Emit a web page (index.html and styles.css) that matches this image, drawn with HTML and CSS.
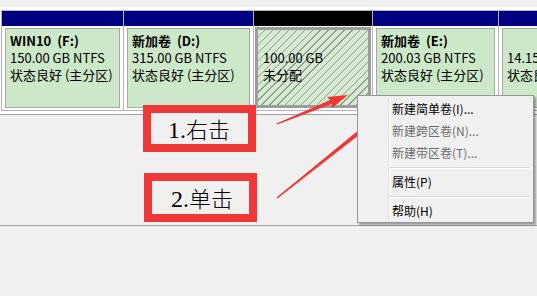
FILE: index.html
```html
<!DOCTYPE html>
<html lang="zh-CN">
  <head>
    <meta charset="UTF-8" />
    <title>磁盘管理</title>
    <link rel="stylesheet" href="styles.css">
  </head>
  <body>
    <div class="top-gap"></div>

    <!-- disk strip with partitions -->
    <div class="disk">
      <div class="part part-win">
        <div class="part-head"></div>
        <div class="part-body">
          <div class="vol">
            <p class="vol-name">WIN10&nbsp;&nbsp;(F:)</p>
            <p>150.00 GB NTFS</p>
            <p>状态良好 (主分区)</p>
          </div>
        </div>
      </div>
      <div class="part part-d">
        <div class="part-head"></div>
        <div class="part-body">
          <div class="vol">
            <p class="vol-name">新加卷&nbsp;&nbsp;(D:)</p>
            <p>315.00 GB NTFS</p>
            <p>状态良好 (主分区)</p>
          </div>
        </div>
      </div>
      <div class="part part-free">
        <div class="part-head black"></div>
        <div class="part-body">
          <div class="vol unallocated">
            <p class="vol-name">&nbsp;</p>
            <p>100.00 GB</p>
            <p>未分配</p>
          </div>
        </div>
      </div>
      <div class="part part-e">
        <div class="part-head"></div>
        <div class="part-body">
          <div class="vol">
            <p class="vol-name">新加卷&nbsp;&nbsp;(E:)</p>
            <p>200.03 GB NTFS</p>
            <p>状态良好 (主分区)</p>
          </div>
        </div>
      </div>
      <div class="part part-last">
        <div class="part-head"></div>
        <div class="part-body">
          <div class="vol">
            <p class="vol-name">&nbsp;</p>
            <p>14.15 GB NTFS</p>
            <p>状态良好 (主分区)</p>
          </div>
        </div>
      </div>
    </div>

    <div class="lower-pane"></div>

    <!-- annotations -->
    <div class="note note-1">1.<span class="cjk">右击</span></div>
    <div class="note note-2">2.<span class="cjk">单击</span></div>

    <svg class="arrows" width="537" height="296" viewBox="0 0 537 296">
      <polygon points="276.7,123.4 330.2,100.1 327.2,97 348,95 331.8,108.2 331.8,103.9 277.3,124.6" />
      <polygon points="276.5,197.4 370,120.8 365.4,118.3 387,110 374.2,129.2 372.8,124.2 277.5,198.6" />
    </svg>

    <!-- context menu -->
    <div class="menu">
      <div class="menu-item">新建简单卷(I)...</div>
      <div class="menu-item disabled">新建跨区卷(N)...</div>
      <div class="menu-item disabled">新建带区卷(T)...</div>
      <div class="menu-sep"></div>
      <div class="menu-item">属性(P)</div>
      <div class="menu-sep"></div>
      <div class="menu-item">帮助(H)</div>
    </div>
  </body>
</html>
```

FILE: styles.css
```css
* {
  margin: 0;
  padding: 0;
  box-sizing: border-box;
}
body {
  background: #f0f0f0;
  font-family: "Noto Sans CJK SC", "Noto Sans", sans-serif;
  width: 537px;
  height: 296px;
  overflow: hidden;
  position: relative;
}
.top-gap {
  height: 7px;
}
/* disk strip */
.disk {
  display: flex;
  background: #fff;
  padding: 3px 0 3px 1px;
  border-bottom: 1px solid #a0a0a0;
  overflow: hidden;
}
.part {
  flex: none;
  border: 1px solid #b4b4b4;
  height: 101px;
}
.part + .part {
  margin-left: -1px;
}
.part-win { width: 123px; }
.part-d { width: 131px; }
.part-free { width: 120px; }
.part-e { width: 127px; }
.part-last { width: 60px; }
.part-head {
  height: 15px;
  background: #000080;
}
.part-head.black {
  background: #000;
}
.part-body {
  padding: 2px 3px;
}
.vol {
  height: 80px;
  background: #cde8c8;
  border: 1px solid #a8a8a8;
  padding: 3px 0 0 4px;
  font-size: 13px;
  line-height: 17px;
  color: #000;
  white-space: nowrap;
  overflow: hidden;
}
.vol-name {
  font-weight: bold;
}
.part-free .part-body {
  padding: 1px 1px;
}
.unallocated {
  height: 81px;
  border: 3px solid #9c9c9c;
  padding: 2px 0 0 5px;
  background: repeating-linear-gradient(
    135deg,
    #d6ebd2 0,
    #d6ebd2 4.6px,
    #8e9e8e 4.6px,
    #8e9e8e 5.6px
  );
}
.lower-pane {
  height: 111px;
  border-bottom: 1px solid #a0a0a0;
}
/* red annotation boxes */
.note {
  position: absolute;
  left: 143px;
  width: 113px;
  border: 8px solid #f03838;
  background: #f0f0f0;
  font-family: "Liberation Serif", "Noto Sans CJK SC", serif;
  font-size: 24px;
  color: #000;
  line-height: 30px;
  padding-left: 17px;
}
.note .cjk {
  font-family: "Noto Sans CJK SC", sans-serif;
  font-weight: 300;
  font-size: 22px;
}
.note-1 {
  top: 105px;
  height: 47px;
}
.note-2 {
  top: 173px;
  left: 144px;
  height: 49px;
  padding-left: 19px;
  line-height: 33px;
}
.arrows {
  position: absolute;
  left: 0;
  top: 0;
  fill: #ee3636;
}
/* right-click menu */
.menu {
  position: absolute;
  left: 357px;
  top: 95px;
  width: 177px;
  height: 128px;
  background: #f0f0f0;
  border: 1px solid #979797;
  box-shadow: 2px 2px 2px rgba(0, 0, 0, 0.35);
  padding: 2px 2px 0 30px;
  font-size: 12px;
}
.menu::before {
  content: "";
  position: absolute;
  left: 30px;
  top: 2px;
  bottom: 2px;
  border-left: 1px solid #e0e0e0;
  border-right: 1px solid #fff;
}
.menu-item {
  height: 22px;
  line-height: 22px;
  padding-left: 4px;
  color: #000;
}
.menu-item.disabled {
  color: #6d6d6d;
}
.menu-sep {
  height: 7px;
  margin-left: 2px;
  margin-right: 2px;
  padding-top: 3px;
}
.menu-sep::after {
  content: "";
  display: block;
  border-top: 1px solid #d7d7d7;
  border-bottom: 1px solid #fff;
}
```
